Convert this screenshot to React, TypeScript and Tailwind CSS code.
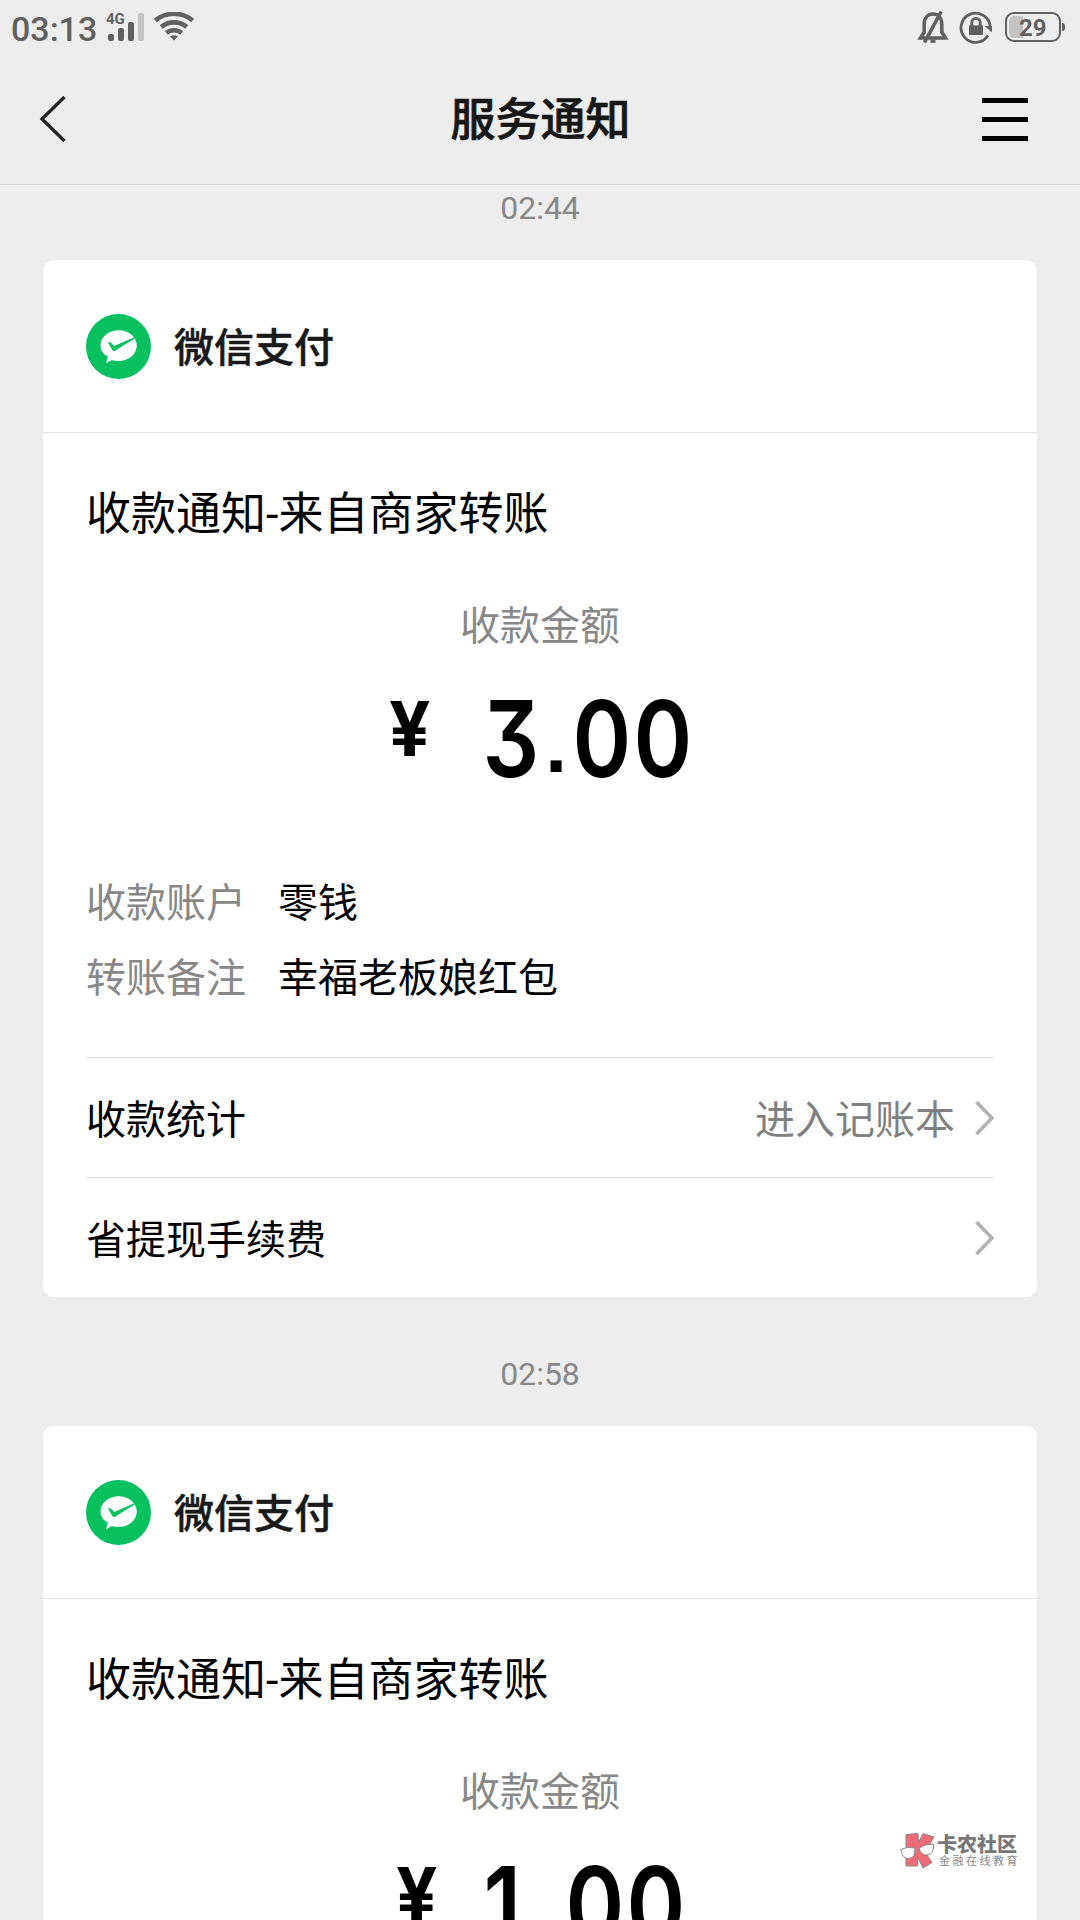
import clsx from "clsx";

interface Notice {
  time: string;
  amount: string;
  account: string;
  remark: string;
}

const notices: Notice[] = [
  { time: "02:44", amount: "3.00", account: "零钱", remark: "幸福老板娘红包" },
  { time: "02:58", amount: "1.00", account: "零钱", remark: "幸福老板娘红包" },
];

function StatusBar() {
  return (
    <div className="flex h-[54px] shrink-0 items-center justify-between pl-[11px] pr-[15px] text-[#606060]">
      <div className="flex items-center">
        <span className="w-[95px] pt-[3px] text-[34px] font-medium leading-none">03:13</span>
        <svg width="38" height="30" viewBox="0 0 38 30" fill="currentColor" className="overflow-visible">
          <text x="0" y="11.500" fontSize="15" fontWeight="700">4G</text>
          <rect x="2" y="22" width="6" height="7" rx="2" />
          <rect x="12" y="16" width="6" height="13" rx="2" />
          <rect x="22" y="10" width="6" height="19" rx="2" />
          <rect x="32" y="1" width="6" height="28" rx="2" fill="#c3c3c3" />
        </svg>
        <svg className="ml-[10px]" width="40" height="30" viewBox="0 0 40 30" fill="none" stroke="currentColor" strokeWidth="4.600">
          <path d="M1.300 8.600a29 29 0 0 1 37.400 0" />
          <path d="M7.200 15a20 20 0 0 1 25.600 0" />
          <path d="M12.400 21a12 12 0 0 1 15.200 0" />
          <path d="M16 24.600q4-2.800 8 0l-4 4z" fill="currentColor" stroke="none" />
        </svg>
      </div>
      <div className="flex items-center">
        <svg className="-translate-x-[2px]" width="32" height="34" viewBox="0 0 32 34" fill="none" stroke="currentColor" strokeWidth="3.600">
          <path d="M3.500 28h25l-3.700-6v-7.500C24.800 8 21.300 4 16 4S7.200 8 7.200 14.500V22z" />
          <path d="M24.200 1.500 7.500 32.500" strokeWidth="3.600" />
          <path d="M13.500 31h5" />
        </svg>
        <svg className="ml-[9px] -translate-x-[1px]" width="34" height="34" viewBox="0 0 34 34" fill="none" stroke="currentColor" strokeWidth="2.800">
          <path d="M29 25.500A14.600 14.600 0 1 1 31.200 17" />
          <path d="M25.500 16h7.500v6.500z" fill="currentColor" stroke="none" />
          <rect x="10" y="15.500" width="14" height="9.500" fill="currentColor" stroke="none" />
          <path d="M12.800 16v-3.500a4.200 4.200 0 0 1 8.400 0V16" />
        </svg>
        <div className="ml-[11px] flex h-[30px] w-[56px] rounded-[9px] border-2 border-[#606060] p-[2px]">
          <div className="h-full w-[14px] rounded-l-[5px] bg-[#c3c3c3]" />
          <span className="-ml-1 text-[24px] font-bold leading-[25px]">29</span>
        </div>
        <div className="ml-[1px] h-[8px] w-[3px] rounded-r bg-[#606060]" />
      </div>
    </div>
  );
}

function Header() {
  return (
    <header className="flex h-[131px] shrink-0 items-center justify-between border-b border-[#d2d2d2] pl-[39px] pr-[52px]">
      <svg width="46" height="48" viewBox="0 0 46 48" fill="none" stroke="#222" strokeWidth="3.200">
        <path d="M25.500 2 3 24l22.500 22" />
      </svg>
      <h1 className="pl-[14px] pt-[2px] text-[45px] font-medium leading-none text-[#171717] [-webkit-text-stroke:0.7px]">
        服务通知
      </h1>
      <div className="flex w-[46px] flex-col gap-[14px]">
        <div className="h-[5px] bg-black" />
        <div className="h-[5px] bg-black" />
        <div className="h-[5px] bg-black" />
      </div>
    </header>
  );
}

function PayLogo() {
  return (
    <svg width="65" height="65" viewBox="0 0 65 65">
      <circle cx="32.500" cy="32.500" r="32.500" fill="#07c160" />
      <path d="M20 49.200l2-6.500C17 39.900 14.500 36.200 14.500 31.500 14.500 23 22.700 16.200 32.700 16.200S50.800 23 50.800 31.500 42.700 47 32.700 47c-2.400 0-4.800-.4-6.800-1z" fill="#fff" />
      <path d="M22 28.300q1.500-.8 3 .500l3.300 3.200L49.300 22.800l.3 1.200-20.600 12.700q-1.600.9-2.800-.8z" fill="#07c160" />
    </svg>
  );
}

function Chevron() {
  return (
    <svg width="19" height="36" viewBox="0 0 19 36" fill="none" stroke="#b2b2b2" strokeWidth="3.600">
      <path d="M1.500 2 17 18 1.500 34" />
    </svg>
  );
}

function Amount({ value }: { value: string }) {
  return (
    <div className="flex h-[120px] justify-center font-['Inter',sans-serif] text-black">
      <span className="mr-[46px] block w-[47px] pl-[2px] pt-[5px] text-[75px] font-bold leading-[75px]">
        <span className="block origin-left scale-x-[0.97]">¥</span>
      </span>
      {value.split("").map((char, index) => (
        <span
          key={index}
          className={clsx(
            "flex justify-center leading-[106px]",
            char === "." ? "w-[30px] font-['Liberation_Sans',sans-serif] text-[78px] font-bold" : "text-[106px] font-semibold",
            char === "1" && "w-[47px] pr-[16px]",
            char !== "." && char !== "1" && "w-[61px]",
          )}
        >
          <span className={clsx("block [font-feature-settings:'cv09']", char === "." ? "pt-[6px]" : "scale-x-[0.84]")}>
            {char}
          </span>
        </span>
      ))}
    </div>
  );
}

function LinkRow({ label, hint }: { label: string; hint?: string }) {
  return (
    <div className="mx-[43px] flex h-[120px] items-center border-t border-[#e2e2e2]">
      <span className="grow pt-[6px]">{label}</span>
      {hint && <span className="mr-[20px] pt-[6px] text-[#808080]">{hint}</span>}
      <Chevron />
    </div>
  );
}

function NoticeCard({ notice }: { notice: Notice }) {
  return (
    <section className="mx-[43px] h-[1037px] shrink-0 rounded-[11px] bg-white text-[40px] leading-[60px] text-black">
      <div className="flex h-[173px] items-center gap-[23px] border-b border-[#e4e4e4] px-[43px]">
        <PayLogo />
        <span className="pt-[6px] font-medium text-[#191919] [-webkit-text-stroke:0.5px]">微信支付</span>
      </div>
      <h2 className="mt-[52px] px-[43px] text-[45px]">收款通知-来自商家转账</h2>
      <p className="mt-[52px] text-center text-[#888]">收款金额</p>
      <div className="mt-[29px]">
        <Amount value={notice.amount} />
      </div>
      <dl className="mt-[68px] grid grid-cols-[192px_1fr] gap-y-[15px] px-[43px]">
        <dt className="text-[#888]">收款账户</dt>
        <dd>{notice.account}</dd>
        <dt className="text-[#888]">转账备注</dt>
        <dd>{notice.remark}</dd>
      </dl>
      <div className="mt-[48px]">
        <LinkRow label="收款统计" hint="进入记账本" />
        <LinkRow label="省提现手续费" />
      </div>
    </section>
  );
}

function Watermark() {
  return (
    <div className="absolute left-[900px] top-[1831px] flex items-start">
      <svg width="36" height="38" viewBox="0 0 36 38" stroke="#888" strokeWidth="1">
        <path d="M6 3.500 18 2.500l.5 9L23 2.500l11 3.500-9 15 7 10.500-9 5.500-5.500-11v9H6z" fill="#ef6b78" />
        <path d="M.8 18.500q6-3.500 14-1.500 1 10-6 10.500Q2 27.500.8 18.500zM19 17q6-4 14.500-4 1 9-5.500 11-7 1-9-7z" fill="#fff" />
      </svg>
      <div className="ml-[1px]">
        <p className="pt-[2px] text-[20px] font-black leading-[24px] text-[#777]">卡农社区</p>
        <p className="ml-[2px] text-[11px] leading-[9px] tracking-[2.500px] text-[#888]">金融在线教育</p>
      </div>
    </div>
  );
}

export default function App() {
  return (
    <div className="relative flex h-[1920px] w-[1080px] flex-col overflow-hidden bg-[#ededed] font-[Roboto,'Noto_Sans_CJK_SC',sans-serif]">
      <StatusBar />
      <Header />
      {notices.map((notice, index) => (
        <div key={notice.time} className="shrink-0">
          <p
            className={clsx(
              "mb-[32px] text-center text-[32px] leading-[40px] text-[#888]",
              index === 0 ? "mt-[3px]" : "mt-[57px]",
            )}
          >
            {notice.time}
          </p>
          <NoticeCard notice={notice} />
        </div>
      ))}
      <Watermark />
    </div>
  );
}
